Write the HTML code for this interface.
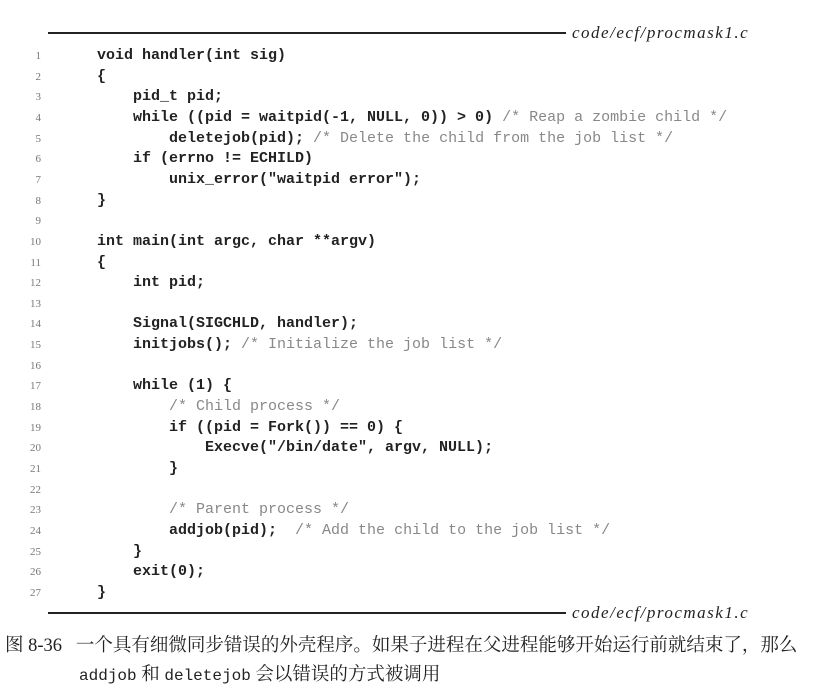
<!DOCTYPE html>
<html><head><meta charset="utf-8"><style>
body{margin:0;width:825px;height:685px;background:#fff;position:relative;overflow:hidden;color:#1a1a1a}
.rule{position:absolute;left:48px;width:518px;height:1.5px;background:#222}
.lbl{position:absolute;left:572px;font:italic 17px "Liberation Serif",serif;letter-spacing:1.5px;color:#222}
.ln{position:absolute;left:0;width:41px;text-align:right;font:11px "Liberation Serif",serif;color:#777}
.c{position:absolute;left:97px;font:bold 15px "Liberation Mono",monospace;white-space:pre;color:#222}
.cm{color:#888;font-weight:normal}
.cap{position:absolute;font:18.5px "Liberation Serif","Noto Serif CJK SC",serif;color:#222;white-space:nowrap}
.m{font-family:"Liberation Mono",monospace;font-size:16px}
</style></head><body>
<div class="rule" style="top:32px"></div><div class="lbl" style="top:23px">code/ecf/procmask1.c</div>
<div id="code"></div>
<div class="rule" style="top:612px"></div><div class="lbl" style="top:603px">code/ecf/procmask1.c</div>
<div class="cap" style="left:5px;top:631px">图 8-36&nbsp;&nbsp;&nbsp;一个具有细微同步错误的外壳程序。如果子进程在父进程能够开始运行前就结束了，那么</div>
<div class="cap" style="left:79px;top:660px"><span class="m">addjob</span> 和 <span class="m">deletejob</span> 会以错误的方式被调用</div>
<script>
var L=["void handler(int sig)","{","    pid_t pid;","    while ((pid = waitpid(-1, NULL, 0)) > 0) /* Reap a zombie child */","        deletejob(pid); /* Delete the child from the job list */","    if (errno != ECHILD)","        unix_error(\"waitpid error\");","}","","int main(int argc, char **argv)","{","    int pid;","","    Signal(SIGCHLD, handler);","    initjobs(); /* Initialize the job list */","","    while (1) {","        /* Child process */","        if ((pid = Fork()) == 0) {","            Execve(\"/bin/date\", argv, NULL);","        }","","        /* Parent process */","        addjob(pid);  /* Add the child to the job list */","    }","    exit(0);","}"];
var h="";
for(var i=0;i<L.length;i++){var t=47+i*20.65;var s=L[i].replace(/&/g,"&amp;").replace(/</g,"&lt;");s=s.replace(/(\/\*.*\*\/)/,'<span class="cm">$1</span>');
h+='<div class="ln" style="top:'+(t+3)+'px">'+(i+1)+'</div><div class="c" style="top:'+t+'px">'+s+'</div>';}
document.getElementById("code").innerHTML=h;
</script>
</body></html>
